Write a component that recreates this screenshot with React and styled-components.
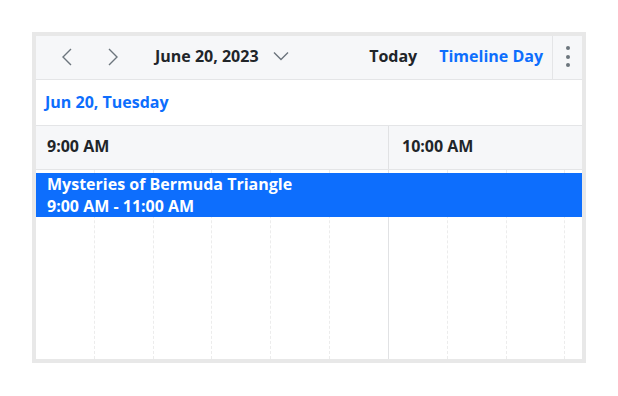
import React from "react";
import styled, { createGlobalStyle } from "styled-components";

const Global = createGlobalStyle`
  html, body { margin: 0; padding: 0; background: #fff; }
  body { font-family: "Open Sans", "Noto Sans", sans-serif; }
`;

const Page = styled.div`
  padding: 32px 0 0 32px;
`;

const Scheduler = styled.div`
  width: 546px;
  height: 323px;
  border: 4px solid #e8e8e8;
  background: #fff;
  display: flex;
  flex-direction: column;
  overflow: hidden;
`;

const Toolbar = styled.div`
  height: 43px;
  flex: none;
  display: flex;
  align-items: center;
  background: #f6f7f9;
  border-bottom: 1px solid #e4e5e7;
`;

const NavButton = styled.button`
  width: 24px;
  height: 30px;
  padding: 0 0 2px;
  margin-left: ${(p) => p.$ml}px;
  border: 0;
  background: transparent;
  display: flex;
  align-items: center;
  justify-content: center;
  color: #6c757d;
`;

const DateLabel = styled.div`
  margin-left: ${(p) => p.$ml}px;
  padding-bottom: 3px;
  font-weight: 700;
  font-size: 16px;
  color: #212529;
  display: flex;
  align-items: center;
  gap: 14px;
`;

const Spacer = styled.div`
  flex: 1;
`;

const ToolText = styled.div`
  padding-bottom: 3px;
  font-weight: 700;
  font-size: 16px;
  color: ${(p) => (p.$active ? "#0d6efd" : "#212529")};
  margin-right: ${(p) => p.$mr}px;
`;

const Kebab = styled.div`
  width: 29px;
  align-self: stretch;
  border-left: 1px solid #e4e5e7;
  display: flex;
  flex-direction: column;
  align-items: center;
  justify-content: center;
  gap: 4.5px;
  padding-bottom: 2px;
`;

const Dot = styled.span`
  width: 4px;
  height: 4px;
  border-radius: 50%;
  background: #6c757d;
`;

const DateRow = styled.div`
  height: 43px;
  flex: none;
  display: flex;
  align-items: center;
  padding: 0 0 2px 9px;
  border-bottom: 1px solid #e4e5e7;
  font-weight: 700;
  font-size: 16px;
  color: #0d6efd;
`;

const Timeline = styled.div`
  flex: 1;
  display: flex;
  flex-direction: column;
  width: 706px;
`;

const HeaderRow = styled.div`
  height: 43px;
  flex: none;
  display: grid;
  grid-template-columns: 353px 353px;
  background: #f6f7f9;
  border-bottom: 1px solid #e4e5e7;
`;

const HourCell = styled.div`
  display: flex;
  align-items: center;
  padding-left: ${(p) => (p.$first ? 11 : 13)}px;
  padding-bottom: 3px;
  border-right: 1px solid #e1e2e4;
  font-weight: 700;
  font-size: 16px;
  color: #212529;
`;

const Body = styled.div`
  flex: 1;
  position: relative;
  display: grid;
  grid-template-columns: repeat(12, 1fr);
`;

const Slot = styled.div`
  border-right: 1px ${(p) => (p.$hour ? "solid #e1e2e4" : "dashed #ececec")};
`;

const Event = styled.div`
  position: absolute;
  left: 0;
  top: 3px;
  width: 546px;
  height: 44px;
  box-sizing: border-box;
  background: #0d6efd;
  color: #fff;
  padding: 0 11px;
  font-weight: 700;
  font-size: 16px;
  line-height: 22px;
`;

const Chevron = ({ d, w = 12, h = 18 }) => (
  <svg width={w} height={h} viewBox={`0 0 ${w} ${h}`} fill="none" stroke="#6c757d" strokeWidth="1.4">
    <path d={d} />
  </svg>
);

export default function App() {
  const slots = Array.from({ length: 12 }, (_, i) => i);
  return (
    <>
      <Global />
      <Page>
        <Scheduler>
          <Toolbar>
            <NavButton $ml={19}>
              <Chevron d="M10 1 L2 9 L10 17" />
            </NavButton>
            <NavButton $ml={22}>
              <Chevron d="M2 1 L10 9 L2 17" />
            </NavButton>
            <DateLabel $ml={30}>
              June 20, 2023
              <Chevron w={16} h={10} d="M1 1.5 L8 8.5 L15 1.5" />
            </DateLabel>
            <Spacer />
            <ToolText $mr={22}>Today</ToolText>
            <ToolText $active $mr={9}>Timeline Day</ToolText>
            <Kebab>
              <Dot />
              <Dot />
              <Dot />
            </Kebab>
          </Toolbar>
          <DateRow>Jun 20, Tuesday</DateRow>
          <Timeline>
            <HeaderRow>
              <HourCell $first>9:00 AM</HourCell>
              <HourCell>10:00 AM</HourCell>
            </HeaderRow>
            <Body>
              {slots.map((i) => (
                <Slot key={i} $hour={i % 6 === 5} />
              ))}
              <Event>
                <div>Mysteries of Bermuda Triangle</div>
                <div>9:00 AM - 11:00 AM</div>
              </Event>
            </Body>
          </Timeline>
        </Scheduler>
      </Page>
    </>
  );
}
